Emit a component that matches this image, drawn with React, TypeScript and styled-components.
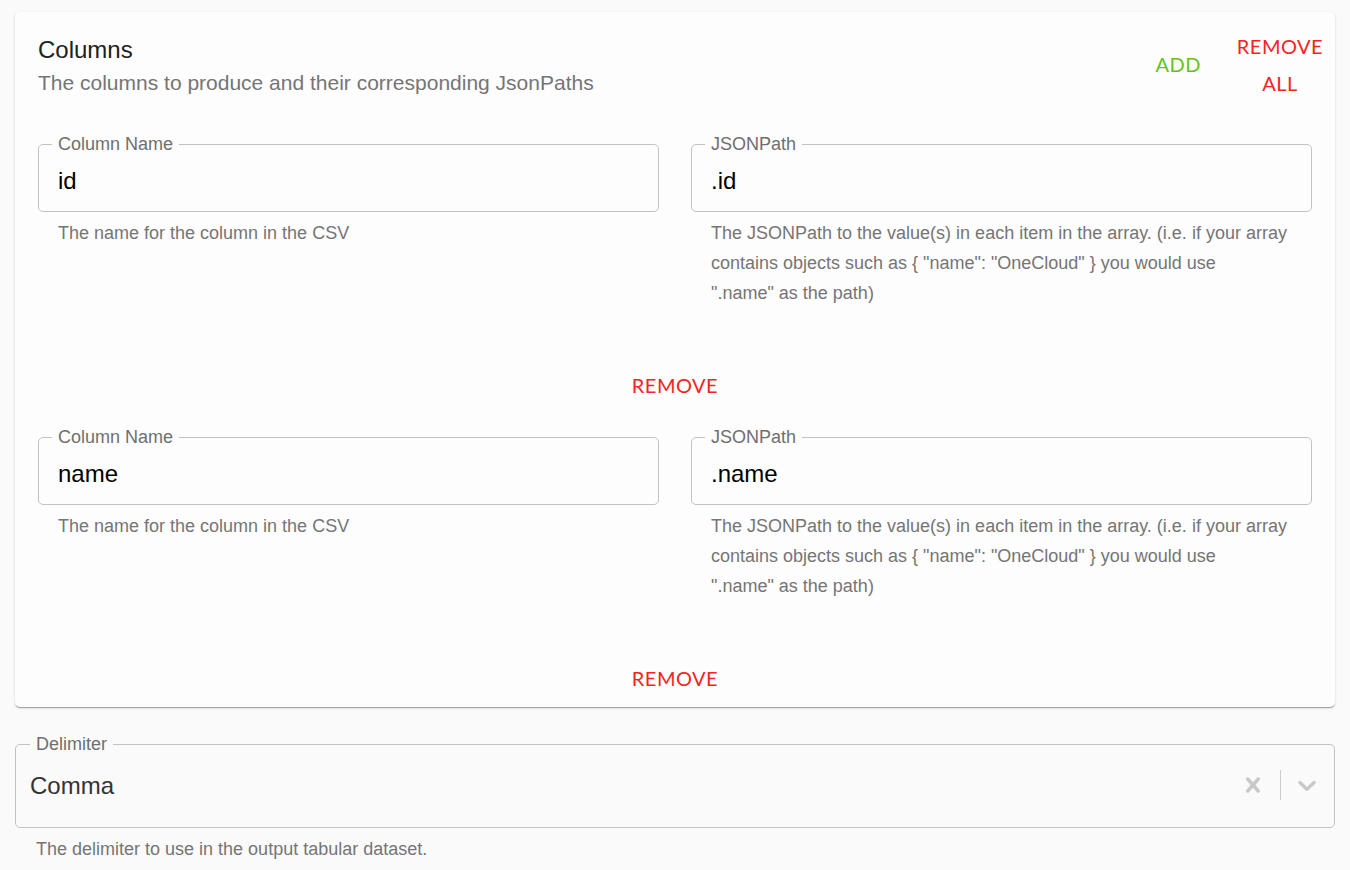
import React from "react";
import styled, { createGlobalStyle } from "styled-components";

const GlobalStyle = createGlobalStyle`
  html, body {
    margin: 0;
    padding: 0;
    background: #fafafa;
    font-family: "Liberation Sans", Arial, Helvetica, sans-serif;
  }
  * { box-sizing: border-box; }
`;

const Page = styled.div`
  padding: 12px 15px 20px;
  display: flex;
  flex-direction: column;
`;

const Card = styled.section`
  background: #fdfdfd;
  border-radius: 5px;
  box-shadow: 0 2px 1px -1px rgba(0, 0, 0, 0.2), 0 1px 1px 0 rgba(0, 0, 0, 0.14),
    0 1px 3px 0 rgba(0, 0, 0, 0.12);
  padding: 7.5px 23px 2px;
  display: flex;
  flex-direction: column;
`;

const Header = styled.header`
  display: flex;
  align-items: center;
  justify-content: space-between;
  margin-right: -24px;
`;

const TitleBlock = styled.div`
  display: flex;
  flex-direction: column;
  padding-top: 3px;
`;

const Title = styled.h2`
  margin: 0;
  font-size: 24px;
  line-height: 32px;
  font-weight: 400;
  color: #212121;
`;

const Subtitle = styled.p`
  margin: 2px 0 0;
  font-size: 21px;
  line-height: 30px;
  color: #757575;
`;

const Actions = styled.div`
  display: flex;
  align-items: center;
  gap: 12px;
`;

const TextButton = styled.button<{ $tone: "add" | "remove"; $narrow?: boolean }>`
  border: none;
  background: transparent;
  cursor: pointer;
  font-family: Lato, "Liberation Sans", sans-serif;
  font-size: 20px;
  line-height: 37px;
  letter-spacing: 0.5px;
  text-transform: uppercase;
  text-align: center;
  padding: 8px 11px;
  color: ${(p) => (p.$tone === "add" ? "#5ac819" : "#f52323")};
  max-width: ${(p) => (p.$narrow ? "112px" : "none")};
`;

const Item = styled.div<{ $first?: boolean }>`
  display: flex;
  flex-direction: column;
  margin-top: ${(p) => (p.$first ? "23.5px" : "14px")};
`;

const FieldRow = styled.div`
  display: grid;
  grid-template-columns: 1fr 1fr;
  column-gap: 32px;
`;

const FieldGroup = styled.div`
  display: flex;
  flex-direction: column;
  min-width: 0;
`;

const Outline = styled.fieldset<{ $wide?: boolean }>`
  margin: 0;
  min-width: 0;
  border: 1px solid #c2c2c2;
  border-radius: 5px;
  padding: ${(p) => (p.$wide ? "0 0.5px 10px 14px" : "0 19px 4px 19px")};
  display: ${(p) => (p.$wide ? "flex" : "block")};
  align-items: center;
`;

const Legend = styled.legend<{ $wide?: boolean }>`
  font-size: 18px;
  line-height: 22px;
  color: #6f6f6f;
  padding: 0 6px;
  margin-left: ${(p) => (p.$wide ? "0" : "-6px")};
`;

const Input = styled.input<{ $wide?: boolean }>`
  display: block;
  width: 100%;
  border: none;
  outline: none;
  background: transparent;
  padding: 0;
  font-family: "Liberation Sans", Arial, Helvetica, sans-serif;
  font-size: 24px;
  height: ${(p) => (p.$wide ? "62px" : "52px")};
  color: ${(p) => (p.$wide ? "#333333" : "#000000")};
`;

const Helper = styled.div<{ $wide?: boolean }>`
  margin: 6px ${(p) => (p.$wide ? "0 0 21px" : "20px 0 20px")};
  font-size: 18px;
  line-height: 30px;
  color: #757575;
`;

const HelperLine = styled.p`
  margin: 0;
  white-space: nowrap;
`;

const RemoveRow = styled.div`
  display: flex;
  justify-content: center;
  margin-top: 51px;
`;

const SelectField = styled.div`
  margin-top: 26px;
  display: flex;
  flex-direction: column;
`;

const Indicators = styled.div`
  display: flex;
  align-items: center;
  align-self: stretch;
  margin-top: -2px;
`;

const IndicatorBox = styled.span`
  display: flex;
  align-items: center;
  padding: 0 11.5px;
  color: #c8c8c8;
`;

const Separator = styled.span`
  width: 1px;
  height: 30px;
  background: #cccccc;
`;

const ClearIcon = () => (
  <svg width="30" height="30" viewBox="0 0 20 20" fill="currentColor" aria-hidden="true">
    <path d="M14.348 14.849c-0.469 0.469-1.229 0.469-1.697 0l-2.651-3.030-2.651 3.029c-0.469 0.469-1.229 0.469-1.697 0-0.469-0.469-0.469-1.229 0-1.697l2.758-3.15-2.759-3.152c-0.469-0.469-0.469-1.228 0-1.697s1.228-0.469 1.697 0l2.652 3.031 2.651-3.031c0.469-0.469 1.228-0.469 1.697 0s0.469 1.229 0 1.697l-2.758 3.152 2.758 3.150c0.469 0.469 0.469 1.229 0 1.698z" />
  </svg>
);

const ChevronIcon = () => (
  <svg width="30" height="30" viewBox="0 0 20 20" fill="currentColor" aria-hidden="true">
    <path d="M4.516 7.548c0.436-0.446 1.043-0.481 1.576 0l3.908 3.747 3.908-3.747c0.533-0.481 1.141-0.446 1.574 0 0.436 0.445 0.408 1.197 0 1.615-0.406 0.418-4.695 4.502-4.695 4.502-0.217 0.223-0.502 0.335-0.787 0.335s-0.57-0.112-0.789-0.335c0 0-4.287-4.084-4.695-4.502s-0.436-1.17 0-1.615z" />
  </svg>
);

const columns = [
  { name: "id", path: ".id" },
  { name: "name", path: ".name" },
];

const pathHelpLines = [
  "The JSONPath to the value(s) in each item in the array. (i.e. if your array",
  'contains objects such as { "name": "OneCloud" } you would use',
  '".name" as the path)',
];

export default function App() {
  return (
    <>
      <GlobalStyle />
      <Page>
        <Card>
          <Header>
            <TitleBlock>
              <Title>Columns</Title>
              <Subtitle>The columns to produce and their corresponding JsonPaths</Subtitle>
            </TitleBlock>
            <Actions>
              <TextButton $tone="add">Add</TextButton>
              <TextButton $tone="remove" $narrow>
                Remove All
              </TextButton>
            </Actions>
          </Header>
          {columns.map((c, i) => (
            <Item key={c.name} $first={i === 0}>
              <FieldRow>
                <FieldGroup>
                  <Outline>
                    <Legend>Column Name</Legend>
                    <Input defaultValue={c.name} />
                  </Outline>
                  <Helper>
                    <HelperLine>The name for the column in the CSV</HelperLine>
                  </Helper>
                </FieldGroup>
                <FieldGroup>
                  <Outline>
                    <Legend>JSONPath</Legend>
                    <Input defaultValue={c.path} />
                  </Outline>
                  <Helper>
                    {pathHelpLines.map((line) => (
                      <HelperLine key={line}>{line}</HelperLine>
                    ))}
                  </Helper>
                </FieldGroup>
              </FieldRow>
              <RemoveRow>
                <TextButton $tone="remove">Remove</TextButton>
              </RemoveRow>
            </Item>
          ))}
        </Card>
        <SelectField>
          <Outline $wide>
            <Legend $wide>Delimiter</Legend>
            <Input $wide defaultValue="Comma" readOnly />
            <Indicators>
              <IndicatorBox>
                <ClearIcon />
              </IndicatorBox>
              <Separator />
              <IndicatorBox>
                <ChevronIcon />
              </IndicatorBox>
            </Indicators>
          </Outline>
          <Helper $wide>
            <HelperLine>The delimiter to use in the output tabular dataset.</HelperLine>
          </Helper>
        </SelectField>
      </Page>
    </>
  );
}
